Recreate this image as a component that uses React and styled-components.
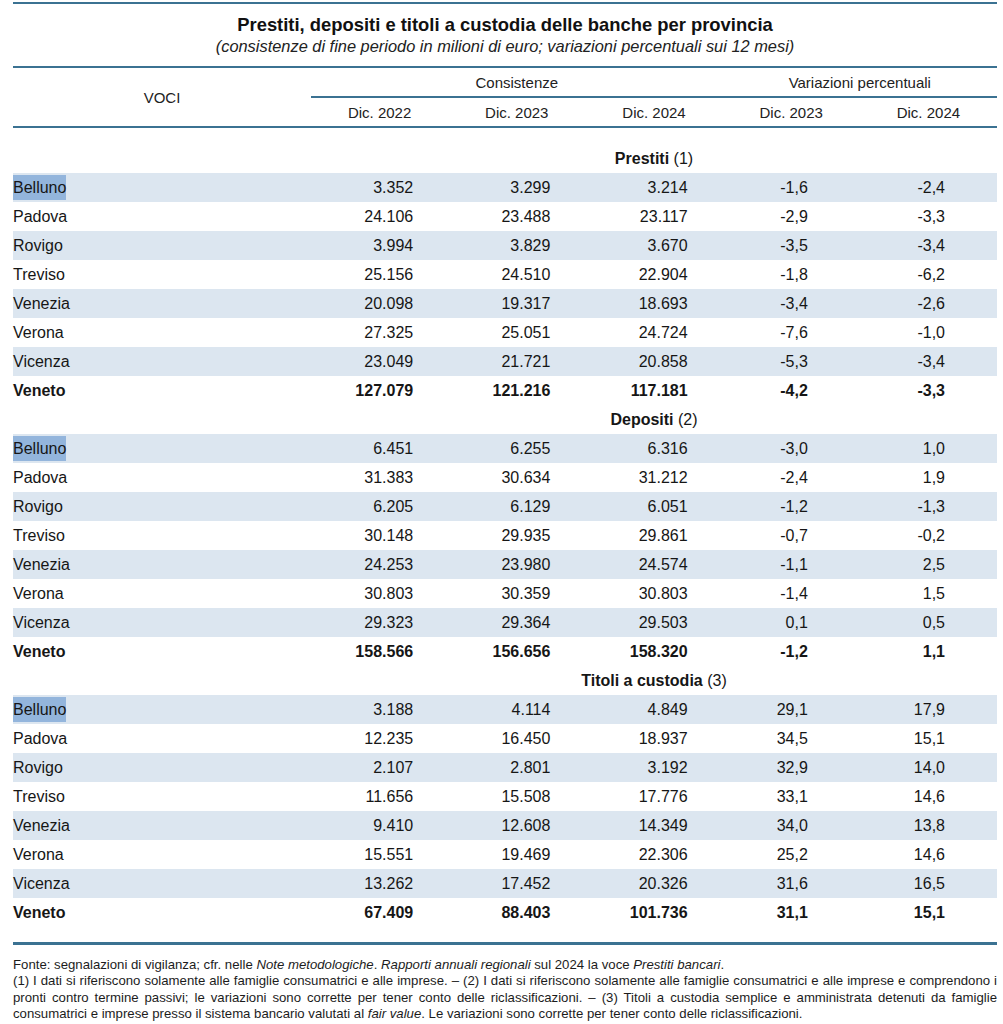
import styled, { createGlobalStyle } from 'styled-components';

const GlobalStyle = createGlobalStyle`
  html, body {
    margin: 0;
    padding: 0;
    background: #ffffff;
  }

  body {
    font-family: 'Liberation Sans', Arial, sans-serif;
    color: #161616;
  }
`;

const LINE = '#3b7292';

const Page = styled.div`
  width: 984px;
  padding: 2px 6px 0 13px;
`;

const Caption = styled.div`
  border-top: 2px solid ${LINE};
  border-bottom: 2px solid ${LINE};
  padding: 10px 0 10px;

  text-align: center;
`;

const Title = styled.div`
  font-size: 18.4px;
  font-weight: 700;
  line-height: 22px;
  color: #111;
`;

const Subtitle = styled.div`
  font-size: 16.4px;
  font-style: italic;
  line-height: 20px;
  color: #222;
`;

const Head = styled.div`
  display: grid;
  grid-template-columns: 298px repeat(5, minmax(0, 1fr));
  grid-template-rows: 28px 2px 28px;
  align-items: center;

  border-bottom: 2px solid ${LINE};

  font-size: 15px;
  color: #222;

  .voci {
    grid-column: 1;
    grid-row: 1 / 4;
    text-align: center;
  }

  .group {
    grid-row: 1;
    text-align: center;
  }

  .group--cons {
    grid-column: 2 / 5;
  }

  .group--var {
    grid-column: 5 / 7;
  }

  .rule {
    grid-column: 2 / 7;
    grid-row: 2;
    height: 2px;
    background: ${LINE};
  }

  .year {
    grid-row: 3;
    text-align: center;
  }
`;

const Body = styled.div`
  padding: 16px 0 15px;
  border-bottom: 3px solid ${LINE};
`;

const Row = styled.div`
  display: grid;
  grid-template-columns: 298px repeat(5, minmax(0, 1fr));
  align-items: center;
  height: 29px;

  background: ${({ $shaded }) => ($shaded ? '#dce6f0' : 'transparent')};
  font-size: 16px;
  font-weight: ${({ $bold }) => ($bold ? 700 : 400)};
  color: #161616;
`;

const Label = styled.div`
  display: flex;
  align-items: center;
`;

const Selected = styled.span`
  background: ${({ $on }) => ($on ? '#93b5dc' : 'transparent')};
  line-height: 25px;
`;

const Num = styled.div`
  text-align: right;
  padding-right: ${({ $var }) => ($var ? '52px' : '35px')};
  white-space: nowrap;
`;

const SectionCell = styled.div`
  grid-column: 4;
  display: flex;
  justify-content: center;
  white-space: nowrap;

  b {
    font-weight: 700;
  }
`;

const Notes = styled.div`
  padding-top: 12px;

  font-size: 13.2px;
  line-height: 16.3px;
  color: #1c1c1c;

  p {
    margin: 0;
  }

  .justify {
    text-align: justify;
  }
`;

const sections = [
  {
    name: 'Prestiti',
    note: '(1)',
    rows: [
      ['Belluno', '3.352', '3.299', '3.214', '-1,6', '-2,4'],
      ['Padova', '24.106', '23.488', '23.117', '-2,9', '-3,3'],
      ['Rovigo', '3.994', '3.829', '3.670', '-3,5', '-3,4'],
      ['Treviso', '25.156', '24.510', '22.904', '-1,8', '-6,2'],
      ['Venezia', '20.098', '19.317', '18.693', '-3,4', '-2,6'],
      ['Verona', '27.325', '25.051', '24.724', '-7,6', '-1,0'],
      ['Vicenza', '23.049', '21.721', '20.858', '-5,3', '-3,4'],
      ['Veneto', '127.079', '121.216', '117.181', '-4,2', '-3,3'],
    ],
  },
  {
    name: 'Depositi',
    note: '(2)',
    rows: [
      ['Belluno', '6.451', '6.255', '6.316', '-3,0', '1,0'],
      ['Padova', '31.383', '30.634', '31.212', '-2,4', '1,9'],
      ['Rovigo', '6.205', '6.129', '6.051', '-1,2', '-1,3'],
      ['Treviso', '30.148', '29.935', '29.861', '-0,7', '-0,2'],
      ['Venezia', '24.253', '23.980', '24.574', '-1,1', '2,5'],
      ['Verona', '30.803', '30.359', '30.803', '-1,4', '1,5'],
      ['Vicenza', '29.323', '29.364', '29.503', '0,1', '0,5'],
      ['Veneto', '158.566', '156.656', '158.320', '-1,2', '1,1'],
    ],
  },
  {
    name: 'Titoli a custodia',
    note: '(3)',
    rows: [
      ['Belluno', '3.188', '4.114', '4.849', '29,1', '17,9'],
      ['Padova', '12.235', '16.450', '18.937', '34,5', '15,1'],
      ['Rovigo', '2.107', '2.801', '3.192', '32,9', '14,0'],
      ['Treviso', '11.656', '15.508', '17.776', '33,1', '14,6'],
      ['Venezia', '9.410', '12.608', '14.349', '34,0', '13,8'],
      ['Verona', '15.551', '19.469', '22.306', '25,2', '14,6'],
      ['Vicenza', '13.262', '17.452', '20.326', '31,6', '16,5'],
      ['Veneto', '67.409', '88.403', '101.736', '31,1', '15,1'],
    ],
  },
];

const years = ['Dic. 2022', 'Dic. 2023', 'Dic. 2024', 'Dic. 2023', 'Dic. 2024'];

const App = () => {
  return (
    <>
      <GlobalStyle />
      <Page>
        <Caption>
          <Title>Prestiti, depositi e titoli a custodia delle banche per provincia</Title>
          <Subtitle>
            (consistenze di fine periodo in milioni di euro; variazioni percentuali sui 12 mesi)
          </Subtitle>
        </Caption>

        <Head>
          <div className="voci">VOCI</div>
          <div className="group group--cons">Consistenze</div>
          <div className="group group--var">Variazioni percentuali</div>
          <div className="rule" />
          {years.map((y, i) => (
            <div key={i} className="year" style={{ gridColumn: i + 2 }}>
              {y}
            </div>
          ))}
        </Head>

        <Body>
          {sections.map((section) => (
            <div key={section.name}>
              <Row>
                <SectionCell>
                  <span>
                    <b>{section.name}</b> {section.note}
                  </span>
                </SectionCell>
              </Row>
              {section.rows.map((row, i) => {
                const total = row[0] === 'Veneto';
                return (
                  <Row key={row[0]} $shaded={i % 2 === 0} $bold={total}>
                    <Label>
                      <Selected $on={i === 0}>{row[0]}</Selected>
                    </Label>
                    {row.slice(1).map((v, j) => (
                      <Num key={j} $var={j > 2}>
                        {v}
                      </Num>
                    ))}
                  </Row>
                );
              })}
            </div>
          ))}
        </Body>

        <Notes>
          <p>
            Fonte: segnalazioni di vigilanza; cfr. nelle <i>Note metodologiche</i>.{' '}
            <i>Rapporti annuali regionali</i> sul 2024 la voce <i>Prestiti bancari</i>.
          </p>
          <p className="justify">
            (1) I dati si riferiscono solamente alle famiglie consumatrici e alle imprese. – (2) I dati
            si riferiscono solamente alle famiglie consumatrici e alle imprese e comprendono i pronti
            contro termine passivi; le variazioni sono corrette per tener conto delle
            riclassificazioni. – (3) Titoli a custodia semplice e amministrata detenuti da famiglie
            consumatrici e imprese presso il sistema bancario valutati al <i>fair value</i>. Le
            variazioni sono corrette per tener conto delle riclassificazioni.
          </p>
        </Notes>
      </Page>
    </>
  );
};

export default App;
